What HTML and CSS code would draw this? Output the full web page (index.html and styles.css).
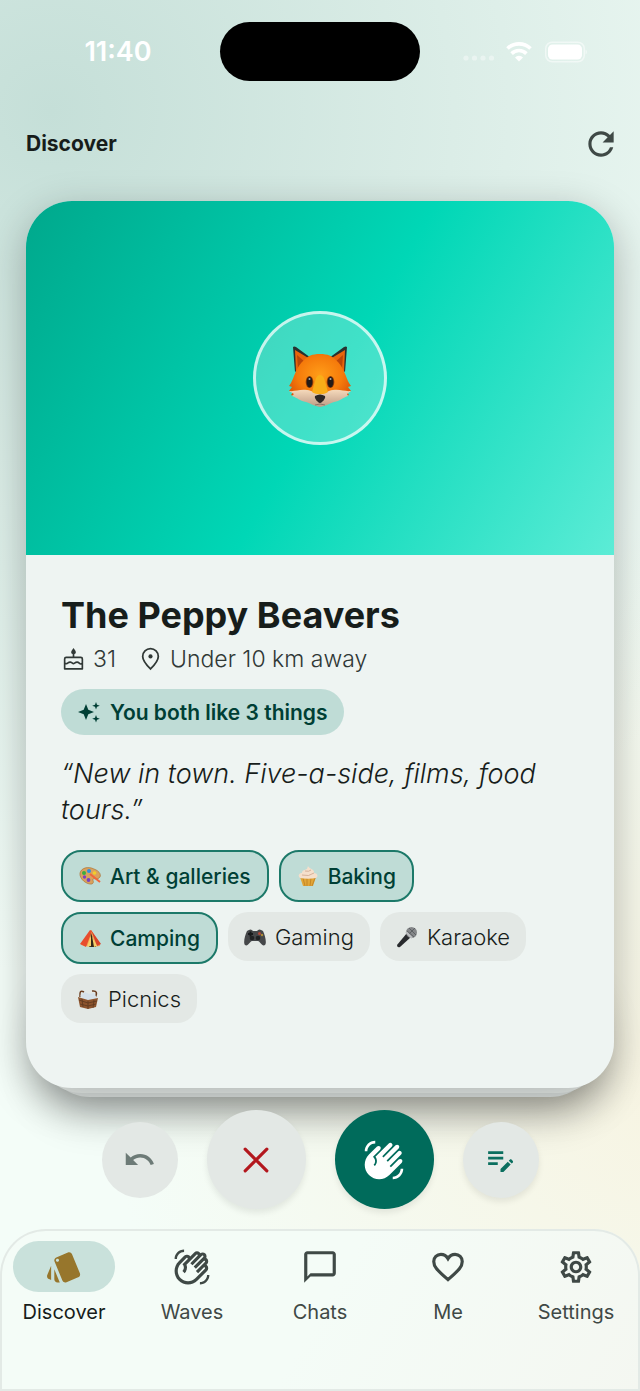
FILE: index.html
```html
<!DOCTYPE html>
<html lang="en">
<head>
<meta charset="utf-8">
<meta name="viewport" content="width=device-width, initial-scale=1">
<title>Discover</title>
<link rel="stylesheet" href="styles.css">
</head>
<body>
<div class="app">
  <div class="status">
    <span class="time">11:40</span>
    <span class="island"></span>
    <svg class="status-icons" viewBox="0 0 126 24" aria-hidden="true">
      <g fill="#fff">
        <g opacity=".4"><circle cx="4" cy="18" r="2.6"/><circle cx="12.500" cy="18" r="2.6"/><circle cx="21" cy="18" r="2.600"/><circle cx="29.500" cy="18" r="2.600"/></g>
        <path d="M57 21.500l-4-4a5.600 5.600 0 0 1 8 0z"/>
        <rect x="86" y="4.500" width="34" height="15" rx="4.500"/>
        <path d="M123.500 9.500c2 .8 2 4.200 0 5z" opacity=".45"/>
      </g>
      <g fill="none" stroke="#fff" stroke-width="3.600"><path d="M45.500 8.500a16.500 16.500 0 0 1 23 0"/><path d="M49.600 13.600a10.500 10.500 0 0 1 14.800 0"/></g>
      <rect x="83.700" y="2.200" width="38.600" height="19.600" rx="6.500" fill="none" stroke="#fff" stroke-width="1.500" opacity=".5"/>
    </svg>
  </div>

  <header class="top">
    <h1>Discover</h1>
    <button class="refresh" aria-label="Refresh"><svg viewBox="0 0 24 24"><path d="M17.65 6.35C16.2 4.9 14.21 4 12 4c-4.42 0-7.99 3.58-7.99 8s3.57 8 7.99 8c3.73 0 6.84-2.55 7.73-6h-2.08c-.82 2.33-3.04 4-5.65 4-3.31 0-6-2.69-6-6s2.69-6 6-6c1.66 0 3.14.69 4.22 1.78L13 11h7V4z"/></svg></button>
  </header>

  <main class="deck">
    <article class="card">
      <div class="hero">
        <div class="avatar">
          <svg viewBox="0 0 66 66" role="img" aria-label="Fox">
            <defs>
              <radialGradient id="fur" cx=".5" cy=".4" r=".6"><stop offset="0" stop-color="#ff9d18"/><stop offset=".6" stop-color="#f57b0b"/><stop offset="1" stop-color="#d95208"/></radialGradient>
              <linearGradient id="muzzle" x1="0" y1="0" x2="0" y2="1"><stop offset="0" stop-color="#f5d9bb"/><stop offset="1" stop-color="#bd9b85"/></linearGradient>
            </defs>
            <path d="M8 27L6 2q1-1 3 0l15 11zM58 27l2-25q-1-1-3 0L42 13z" fill="#28312f"/>
            <path d="M9 27L8 5 23 14zM57 27l1-22-15 9z" fill="#e9650b"/>
            <path d="M11 24L10 10l8 7zM55 24l1-14-8 7z" fill="#b94708"/>
            <path d="M33 9c-8 0-12 2-16 6C9 22 7 33 4 38l-2 3 3 1-3 4 4 1-2 3c6 2 9 3 13 5 6 1 9 5 16 6 7-1 10-5 16-6 4-2 7-3 13-5l-2-3 4-1-3-4 3-1-2-3c-3-5-5-16-13-23-4-4-8-6-16-6z" fill="url(#fur)"/>
            <path d="M2 46c7 1 12-3 22 0 4 1 6 3 9 3s5-2 9-3c10-3 15 1 22 0l-4 3 1 2c-6 2-8 5-14 6-6 2-8 4-14 5-6-1-8-3-14-5-6-1-8-4-14-6l2-2z" fill="url(#muzzle)"/>
            <path d="M29 33c2-4 6-4 8 0l4 14c-4 3-12 3-16 0z" fill="#f9ae18"/>
            <ellipse cx="22.500" cy="37" rx="3.800" ry="6" fill="#8c3a05"/><ellipse cx="43.500" cy="37" rx="3.800" ry="6" fill="#8c3a05"/>
            <ellipse cx="22.500" cy="37" rx="2.800" ry="5.300" fill="#231b18"/><ellipse cx="43.500" cy="37" rx="2.800" ry="5.300" fill="#231b18"/>
            <circle cx="22.500" cy="34" r="1" fill="#aaa"/><circle cx="43.500" cy="34" r="1" fill="#aaa"/>
            <path d="M28 51q5-3 10 0 1 2-3 6-2 2-4 0-4-4-3-6z" fill="#2c2725"/>
            <path d="M28 60q5-2 10 0" fill="none" stroke="#8c7469"/>
          </svg>
        </div>
      </div>
      <div class="info">
        <h2>The Peppy Beavers</h2>
        <div class="facts">
          <span class="fact"><svg viewBox="0 0 24 24"><g fill="none" stroke="currentColor" stroke-width="1.600" stroke-linejoin="round"><path d="M3.500 21v-9.500q0-1.500 1.500-1.500h14q1.500 0 1.500 1.500V21zM12 6v4M3.500 15.500c3 2 3-1.500 5.500-1s2 2.500 4 1 3-1.500 4.500 0 2 1 3 0"/></g><path d="M12 1q4.500 5.500 0 6-4.500-.5 0-6z"/></svg>31</span>
          <span class="fact"><svg viewBox="0 0 24 24"><path d="M12 21C7 16 4.500 12.500 4.500 9a7.500 7.500 0 0 1 15 0C19.500 12.500 17 16 12 21z" fill="none" stroke="currentColor" stroke-width="1.700"/><circle cx="12" cy="9" r="2"/></svg>Under 10 km away</span>
        </div>
        <div class="match"><svg viewBox="0 0 24 24"><path d="M9 4l2.300 5.700L17 12l-5.700 2.300L9 20l-2.300-5.700L1 12l5.700-2.300zM19 2l1 2.800 2.800 1-2.800 1-1 2.800-1-2.800-2.800-1 2.800-1zM19 15l1 2.800 2.800 1-2.800 1-1 2.800-1-2.800-2.800-1 2.800-1z"/></svg>You both like 3 things</div>
        <blockquote>“New in town. Five-a-side, films, food tours.”</blockquote>
        <ul class="tags">
          <li class="tag shared"><svg viewBox="0 0 22 22"><path d="M1 8C2 3 9 1 15 4c6 2 8 7 5 9-2 2-5 0-6 1s2 3-1 5C8 20 0 14 1 8z" fill="#d9a25e" stroke="#a66a2c" stroke-width=".6"/><circle cx="5" cy="8" r="2" fill="#3cae3f"/><circle cx="10" cy="6" r="2" fill="#318fe0"/><circle cx="15.500" cy="8" r="1.800" fill="#f2cd2a"/><circle cx="5.500" cy="12" r="1.700" fill="#8540ba"/><circle cx="9.500" cy="15" r="1.900" fill="#7842c3"/><path d="M11 9l10 8" stroke="#f1663a" stroke-width="2"/></svg>Art &amp; galleries</li>
          <li class="tag shared"><svg viewBox="0 0 22 22"><path d="M3 12h16l-3 9H6z" fill="#e2a637"/><path d="M6 13l2 8M10 13v8M14 13l-1 8M18 13l-3 8" stroke="#b87920" stroke-width=".7"/><path d="M3 13c-3-3 0-5 2-5 0-3 3-3 5-4l1-3c1 3 7 3 6 7 3 0 5 3 2 5-5 1-11 1-16 0z" fill="#f5dfcb"/><path d="M5 10q7 2 12-2M8 6q4 1 6-1" fill="none" stroke="#cda58b" stroke-width=".8"/></svg>Baking</li>
          <li class="tag shared"><svg viewBox="0 0 22 22"><path d="M2 18L12 3l9 13v3l-8 1z" fill="#f4a253"/><path d="M1 17L11 3l2 1-6 16z" fill="#e84d2d"/><path d="M12 3L22 17l-4 2z" fill="#d9442b"/><path d="M12 6l5 14h-7z" fill="#342719"/><path d="M12 8l-4 12 4-1zM13 9l5 10-3 1z" fill="#f8cf69"/></svg>Camping</li>
          <li class="tag"><svg viewBox="0 0 22 22"><path d="M3 5q4-3 6 0h4q2-3 6 0c2 4 4 12 2 14-3 2-5-4-7-4H8c-2 0-4 6-7 4-2-2 0-10 2-14z" fill="#454749"/><path d="M4 8h5M6.500 5.500v5" stroke="#17191b" stroke-width="2"/><circle cx="15.500" cy="7.500" r="1.500" fill="#b34737"/><circle cx="18" cy="9" r="1.200" fill="#ad8c36"/><circle cx="8" cy="12" r="2.300" fill="#202224"/><circle cx="14" cy="12" r="2.300" fill="#202224"/></svg>Gaming</li>
          <li class="tag"><svg viewBox="0 0 22 22"><path d="M11 7l4 4L4 21q-3 1-3-2z" fill="#282a2d"/><circle cx="15.500" cy="6.500" r="5.500" fill="#858789"/><path d="M11 5l7 6M13 2l7 7M12 9l7-7" stroke="#5d6063"/><path d="M10 6l6 6" stroke="#bdbfc1" stroke-width="2"/></svg>Karaoke</li>
          <li class="tag"><svg viewBox="0 0 22 22"><path d="M3 9q-1-8 4-5M18 10q4-8-3-7" fill="none" stroke="#6b3e21" stroke-width="1.500"/><path d="M3 8l5-4 4 2 5-1 3 5-8 4z" fill="#d6e1e9"/><path d="M1 9l10 3 10-2-2 9-8 2-8-2z" fill="#8d542d"/><path d="M2 12l9 3 9-2M3 16l8 2 8-2M5 11l1 8M11 13v8M17 12l-1 8" fill="none" stroke="#5d3820" stroke-width=".8"/></svg>Picnics</li>
        </ul>
      </div>
    </article>
  </main>

  <div class="actions">
    <button class="act undo" aria-label="Undo"><svg viewBox="0 0 24 24"><path d="M12.500 8c-2.650 0-5.050.99-6.900 2.600L2 7v9h9l-3.620-3.620c1.390-1.160 3.160-1.880 5.120-1.880 3.540 0 6.550 2.310 7.600 5.500l2.370-.78C21.080 11.030 17.150 8 12.500 8z"/></svg></button>
    <button class="act big pass" aria-label="Pass"><svg viewBox="0 0 24 24"><path d="M5.500 5.500l13 13M18.500 5.500l-13 13" fill="none" stroke="currentColor" stroke-width="1.900" stroke-linecap="round"/></svg></button>
    <button class="act big wave" aria-label="Wave"><svg viewBox="0 0 24 24"><path d="M23 17c0 3.310-2.690 6-6 6v-1.500c2.480 0 4.500-2.020 4.500-4.500H23zM1 7c0-3.310 2.690-6 6-6v1.500C4.520 2.500 2.500 4.520 2.500 7H1zM8.010 4.320l-4.600 4.600c-3.220 3.220-3.220 8.450 0 11.670s8.450 3.220 11.670 0l7.070-7.070c.49-.49.49-1.280 0-1.770-.49-.49-1.280-.49-1.770 0l-4.420 4.420-.71-.71 6.540-6.540c.49-.49.49-1.280 0-1.770s-1.280-.49-1.770 0l-5.830 5.830-.71-.71 6.890-6.890c.49-.49.49-1.280 0-1.770s-1.280-.49-1.770 0l-6.890 6.890-.69-.7 5.480-5.480c.49-.49.49-1.280 0-1.770s-1.280-.49-1.770 0l-7.620 7.620c1.220 1.570 1.110 3.840-.33 5.280l-.71-.71c1.170-1.170 1.170-3.070 0-4.240l-.35-.35 4.070-4.070c.49-.49.49-1.280 0-1.770-.5-.48-1.290-.48-1.780.01z"/></svg></button>
    <button class="act note" aria-label="Send a note"><svg viewBox="0 0 24 24"><path d="M3 10h11v2H3v-2zm0-2h11V6H3v2zm0 8h7v-2H3v2zm15.010-3.130.71-.71c.39-.39 1.020-.39 1.410 0l.71.71c.39.39.39 1.020 0 1.410l-.71.71-2.120-2.120zm-.71.71-5.300 5.300V21h2.120l5.300-5.300-2.120-2.120z"/></svg></button>
  </div>

  <nav class="tabs">
    <a class="tab active" href="#discover" aria-current="page"><span class="pill"><svg viewBox="0 0 24 24"><path d="M2.530 19.650l1.340.56v-9.030l-2.430 5.860c-.41 1.020.08 2.190 1.090 2.610zm19.500-3.700L17.070 3.980c-.31-.75-1.040-1.210-1.810-1.230-.26 0-.53.04-.79.15L7.100 5.950c-.75.31-1.210 1.030-1.230 1.800-.01.27.04.54.15.8l4.960 11.970c.31.76 1.050 1.220 1.830 1.230.26 0 .52-.05.77-.15l7.360-3.050c1.020-.42 1.510-1.590 1.090-2.600zM7.880 8.750c-.55 0-1-.45-1-1s.45-1 1-1 1 .45 1 1-.45 1-1 1zm-2 11c0 1.100.9 2 2 2h1.450l-3.450-8.340v6.340z"/></svg></span>Discover</a>
    <a class="tab" href="#waves"><span class="pill"><svg viewBox="0 0 24 24"><path d="M7.030 4.950L3.490 8.490c-3.320 3.320-3.320 8.700 0 12.020s8.700 3.320 12.020 0l6.010-6.010c.97-.97.97-2.560 0-3.540-.12-.12-.25-.23-.38-.33l.38-.38c.97-.97.97-2.560 0-3.540-.16-.16-.35-.3-.54-.41.4-.92.230-2.020-.52-2.770-.87-.87-2.220-.96-3.200-.28-.1-.15-.21-.29-.34-.42-.97-.97-2.560-.97-3.540 0L10.900 5.320c-.1-.13-.2-.26-.32-.38-.98-.96-2.570-.96-3.550.01zm1.420 1.420c.2-.2.51-.2.71 0s.2.510 0 .71l-3.180 3.180c1.170 1.170 1.170 3.070 0 4.240l1.410 1.410c1.450-1.450 1.820-3.570 1.120-5.360l6.300-6.300c.2-.2.51-.2.71 0s.2.510 0 .71l-4.600 4.600 1.410 1.410 6.010-6.010c.2-.2.51-.2.71 0s.2.510 0 .71l-6.010 6.010 1.410 1.410 4.950-4.950c.2-.2.51-.2.71 0s.2.510 0 .71l-5.660 5.660 1.410 1.410 3.540-3.540c.2-.2.51-.2.71 0s.2.510 0 .71l-6.010 6.010c-2.540 2.540-6.650 2.540-9.190 0s-2.540-6.650 0-9.190l3.530-3.540zM23 17c0 3.310-2.690 6-6 6v-1.500c2.480 0 4.500-2.020 4.500-4.500H23zM1 7c0-3.310 2.690-6 6-6v1.500C4.520 2.500 2.500 4.520 2.500 7H1z"/></svg></span>Waves</a>
    <a class="tab" href="#chats"><span class="pill"><svg viewBox="0 0 24 24"><path d="M20 2H4c-1.100 0-2 .9-2 2v18l4-4h14c1.100 0 2-.9 2-2V4c0-1.100-.9-2-2-2zm0 14H6l-2 2V4h16v12z"/></svg></span>Chats</a>
    <a class="tab" href="#me"><span class="pill"><svg viewBox="0 0 24 24"><path d="M12 20C4.500 13.500 3 11.500 3 8.500 3 6 5 4 7.500 4 9.500 4 11 5 12 6.700 13 5 14.500 4 16.500 4 19 4 21 6 21 8.500c0 3-1.500 5-9 11.500z" fill="none" stroke="currentColor" stroke-width="2"/></svg></span>Me</a>
    <a class="tab" href="#settings"><span class="pill"><svg viewBox="0 0 24 24"><path d="M19.430 12.980c.04-.32.070-.64.070-.98 0-.34-.03-.66-.07-.98l2.110-1.650c.19-.15.240-.42.120-.64l-2-3.460c-.09-.16-.26-.25-.44-.25-.06 0-.12.010-.17.030l-2.490 1c-.52-.4-1.080-.73-1.690-.98l-.38-2.650C14.460 2.180 14.250 2 14 2h-4c-.25 0-.46.180-.49.420l-.38 2.650c-.61.250-1.170.590-1.690.980l-2.490-1c-.06-.02-.12-.03-.18-.03-.17 0-.34.090-.43.250l-2 3.460c-.13.220-.07.490.12.640l2.110 1.650c-.04.320-.07.650-.07.980 0 .33.030.660.070.980l-2.110 1.650c-.19.150-.24.420-.12.640l2 3.460c.09.160.26.250.44.250.06 0 .12-.01.17-.03l2.490-1c.52.400 1.080.730 1.690.980l.38 2.650c.03.240.24.420.49.420h4c.25 0 .46-.18.490-.42l.38-2.650c.61-.25 1.170-.59 1.690-.98l2.490 1c.06.020.12.030.18.030.17 0 .34-.09.430-.25l2-3.460c.12-.22.070-.49-.12-.64l-2.110-1.650zm-1.980-1.710c.04.310.050.520.050.730 0 .210-.02.430-.05.730l-.14 1.130.89.700 1.080.840-.7 1.210-1.270-.51-1.040-.42-.9.680c-.43.320-.84.560-1.250.730l-1.060.430-.16 1.130-.2 1.350h-1.400l-.19-1.350-.16-1.130-1.060-.43c-.43-.18-.83-.41-1.230-.71l-.91-.7-1.060.430-1.270.510-.7-1.210 1.080-.84.890-.7-.14-1.130c-.03-.31-.05-.54-.05-.74s.02-.43.050-.73l.14-1.130-.89-.7-1.080-.84.700-1.210 1.270.510 1.040.420.900-.68c.43-.32.840-.56 1.250-.73l1.060-.43.160-1.130.2-1.350h1.390l.19 1.350.16 1.130 1.060.430c.43.180.83.410 1.230.710l.91.700 1.060-.43 1.270-.51.700 1.210-1.070.850-.89.700.14 1.130zM12 8c-2.210 0-4 1.790-4 4s1.790 4 4 4 4-1.790 4-4-1.790-4-4-4zm0 6c-1.100 0-2-.9-2-2s.9-2 2-2 2 .9 2 2-.9 2-2 2z"/></svg></span>Settings</a>
  </nav>
</div>
</body>
</html>
```
FILE: styles.css
```css
* { box-sizing: border-box; }

body {
  margin: 0;
  font-family: Inter, "Noto Sans", sans-serif;
  color: #171d1b;
}

h1, h2, blockquote, ul { margin: 0; padding: 0; }
button { border: 0; padding: 0; background: none; font: inherit; }
svg { display: block; fill: currentColor; }

.app {
  min-height: 100vh;
  display: flex;
  flex-direction: column;
  background:
    radial-gradient(circle at 8% 8%, #c5dfd8 0, rgba(197, 223, 216, 0) 860px),
    radial-gradient(circle at 105% 78%, #f7f4e2 0, rgba(247, 244, 226, 0) 560px),
    #f4fdf8;
}

.status {
  display: grid;
  grid-template-columns: 1fr 200px 1fr;
  align-items: center;
  padding-top: 22px;
}
.time { justify-self: center; padding-left: 16px; color: #fff; font-size: 27px; font-weight: 600; }
.island { height: 59px; border-radius: 30px; background: #000; }
.status-icons { width: 126px; height: 24px; justify-self: center; margin-right: 10px; }

.top {
  display: flex;
  justify-content: space-between;
  align-items: center;
  height: 120px;
  padding: 5px 20px 0 26px;
}
h1 { font-size: 21px; font-weight: 700; }
.refresh { color: #3f4946; }
.refresh svg { width: 38px; height: 38px; }

.deck {
  position: relative;
  z-index: 0;
  flex: 1;
  display: flex;
  margin: 0 26px;
}
.deck::before, .deck::after {
  content: "";
  position: absolute;
  z-index: -1;
  height: 120px;
  border-radius: 46px;
}
.deck::before { left: 18px; right: 18px; bottom: -9px; z-index: -2; background: #e3e9e6; box-shadow: 0 14px 44px rgba(0, 0, 0, .32); }
.deck::after { left: 10px; right: 10px; bottom: -5px; background: #f2f8f5; }

.card {
  flex: 1;
  display: flex;
  flex-direction: column;
  overflow: hidden;
  border-radius: 46px;
  background: #eef4f2;
  box-shadow: 0 12px 40px rgba(0, 0, 0, .28);
}
.hero {
  flex: none;
  height: 354px;
  display: grid;
  place-items: center;
  background: linear-gradient(120deg, #00a88c 0, #00d7b6 52%, #5cecd6 100%);
}
.avatar {
  width: 134px;
  height: 134px;
  display: grid;
  place-items: center;
  border: 3px solid rgba(255, 255, 255, .7);
  border-radius: 50%;
  background: rgba(255, 255, 255, .25);
}
.avatar svg { width: 66px; height: 66px; }

.info { padding: 36px 35px 64px; }
h2 { font-size: 36px; line-height: 48px; font-weight: 700; }
.facts { display: flex; gap: 22px; margin-top: 4px; color: #303836; font-size: 23px; line-height: 32px; font-weight: 300; }
.fact { display: flex; align-items: center; gap: 7px; }
.fact svg { width: 25px; height: 25px; }
.match {
  width: fit-content;
  display: flex;
  align-items: center;
  gap: 9px;
  height: 46px;
  margin-top: 14px;
  padding: 0 16px;
  border-radius: 23px;
  background: #bfdcd6;
  color: #003f35;
  font-size: 21px;
  font-weight: 600;
}
.match svg { width: 24px; height: 24px; }
blockquote { margin-top: 21px; font-size: 27px; line-height: 36px; font-style: italic; font-weight: 300; }

.tags { display: flex; flex-wrap: wrap; align-items: flex-start; gap: 10px; margin-top: 22px; list-style: none; }
.tag {
  display: flex;
  align-items: center;
  gap: 9px;
  height: 49px;
  padding: 0 16px;
  border-radius: 20px;
  background: #e3e8e5;
  font-size: 22px;
  font-weight: 300;
}
.tag svg { width: 22px; height: 22px; }
.shared { height: 52px; border: 2px solid #1c7969; background: #bfdcd6; color: #003f35; font-size: 21px; font-weight: 500; }

.actions {
  position: relative;
  display: flex;
  justify-content: center;
  align-items: center;
  gap: 29px;
  padding: 22px 0 20px;
}
.act {
  width: 76px;
  height: 76px;
  display: grid;
  place-items: center;
  border-radius: 50%;
  background: #e3e8e5;
  box-shadow: 0 4px 6px rgba(0, 0, 0, .08);
}
.act svg { width: 33px; height: 33px; }
.big { width: 99px; height: 99px; }
.undo { color: #6d7b77; box-shadow: none; }
.pass { color: #b3171d; }
.pass svg { width: 40px; height: 40px; }
.wave { background: #006b5b; color: #fff; }
.wave svg { width: 42px; height: 42px; }
.note { color: #0b6f5f; }

.tabs {
  display: grid;
  grid-template-columns: repeat(5, 1fr);
  height: 162px;
  padding-top: 12px;
  border-radius: 46px 46px 0 0;
  background: linear-gradient(120deg, #f4fcf7 50%, #f4f7f1);
  box-shadow: inset 0 0 0 2px #e3eae6;
}
.tab {
  display: flex;
  flex-direction: column;
  align-items: center;
  gap: 6px;
  color: #3f4946;
  font-size: 20px;
  line-height: 28px;
  text-decoration: none;
}
.pill { width: 102px; height: 51px; display: grid; place-items: center; border-radius: 26px; }
.pill svg { width: 38px; height: 38px; }
.active { color: #171d1b; }
.active .pill { background: #c9e1db; color: #97762c; }
```
